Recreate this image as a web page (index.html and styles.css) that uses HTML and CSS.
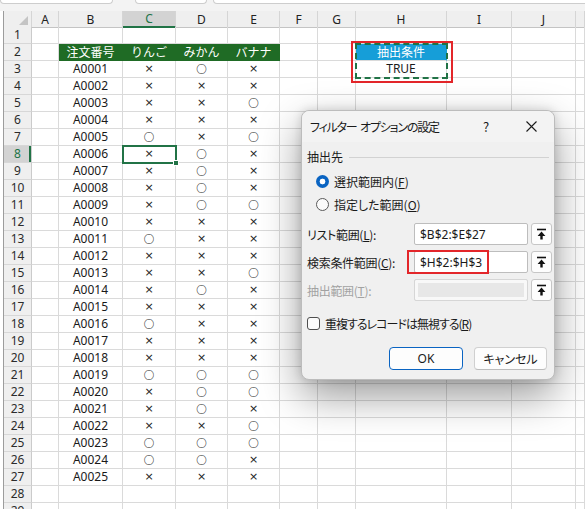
FILE: index.html
```html
<!DOCTYPE html>
<html lang="ja">
<head>
<meta charset="utf-8">
<title>フィルター オプションの設定</title>
<link rel="stylesheet" href="styles.css">
</head>
<body>
<div class="app">
  <div class="topbar">
    <div class="box b1"></div>
    <div class="box b2"></div>
    <div class="box b3"></div>
  </div>
  <div class="sheet">
    <div class="row colhdr"><span class="corner"><svg width="9" height="9" viewBox="0 0 9 9"><polygon points="9,0 9,9 0,9" fill="#c4c4c4"/></svg></span><span>A</span><span>B</span><span class="csel">C</span><span>D</span><span>E</span><span>F</span><span>G</span><span>H</span><span>I</span><span>J</span><span></span></div>
    <div class="row"><span class="rh">1</span><span></span><span></span><span></span><span></span><span></span><span></span><span></span><span></span><span></span><span></span><span></span></div>
    <div class="row"><span class="rh">2</span><span></span><span class="g">注文番号</span><span class="g">りんご</span><span class="g">みかん</span><span class="g">バナナ</span><span></span><span></span><span class="q">抽出条件</span><span></span><span></span><span></span></div>
    <div class="row"><span class="rh">3</span><span></span><span>A0001</span><span class="x">×</span><span class="o">○</span><span class="x">×</span><span></span><span></span><span>TRUE</span><span></span><span></span><span></span></div>
    <div class="row"><span class="rh">4</span><span></span><span>A0002</span><span class="x">×</span><span class="x">×</span><span class="x">×</span><span></span><span></span><span></span><span></span><span></span><span></span></div>
    <div class="row"><span class="rh">5</span><span></span><span>A0003</span><span class="x">×</span><span class="x">×</span><span class="o">○</span><span></span><span></span><span></span><span></span><span></span><span></span></div>
    <div class="row"><span class="rh">6</span><span></span><span>A0004</span><span class="x">×</span><span class="x">×</span><span class="x">×</span><span></span><span></span><span></span><span></span><span></span><span></span></div>
    <div class="row"><span class="rh">7</span><span></span><span>A0005</span><span class="o">○</span><span class="x">×</span><span class="o">○</span><span></span><span></span><span></span><span></span><span></span><span></span></div>
    <div class="row"><span class="rh rsel">8</span><span></span><span>A0006</span><span class="x">×</span><span class="o">○</span><span class="x">×</span><span></span><span></span><span></span><span></span><span></span><span></span></div>
    <div class="row"><span class="rh">9</span><span></span><span>A0007</span><span class="x">×</span><span class="o">○</span><span class="x">×</span><span></span><span></span><span></span><span></span><span></span><span></span></div>
    <div class="row"><span class="rh">10</span><span></span><span>A0008</span><span class="x">×</span><span class="o">○</span><span class="x">×</span><span></span><span></span><span></span><span></span><span></span><span></span></div>
    <div class="row"><span class="rh">11</span><span></span><span>A0009</span><span class="x">×</span><span class="o">○</span><span class="o">○</span><span></span><span></span><span></span><span></span><span></span><span></span></div>
    <div class="row"><span class="rh">12</span><span></span><span>A0010</span><span class="x">×</span><span class="x">×</span><span class="x">×</span><span></span><span></span><span></span><span></span><span></span><span></span></div>
    <div class="row"><span class="rh">13</span><span></span><span>A0011</span><span class="o">○</span><span class="x">×</span><span class="x">×</span><span></span><span></span><span></span><span></span><span></span><span></span></div>
    <div class="row"><span class="rh">14</span><span></span><span>A0012</span><span class="x">×</span><span class="x">×</span><span class="x">×</span><span></span><span></span><span></span><span></span><span></span><span></span></div>
    <div class="row"><span class="rh">15</span><span></span><span>A0013</span><span class="x">×</span><span class="x">×</span><span class="o">○</span><span></span><span></span><span></span><span></span><span></span><span></span></div>
    <div class="row"><span class="rh">16</span><span></span><span>A0014</span><span class="x">×</span><span class="o">○</span><span class="x">×</span><span></span><span></span><span></span><span></span><span></span><span></span></div>
    <div class="row"><span class="rh">17</span><span></span><span>A0015</span><span class="x">×</span><span class="x">×</span><span class="x">×</span><span></span><span></span><span></span><span></span><span></span><span></span></div>
    <div class="row"><span class="rh">18</span><span></span><span>A0016</span><span class="o">○</span><span class="x">×</span><span class="x">×</span><span></span><span></span><span></span><span></span><span></span><span></span></div>
    <div class="row"><span class="rh">19</span><span></span><span>A0017</span><span class="x">×</span><span class="x">×</span><span class="x">×</span><span></span><span></span><span></span><span></span><span></span><span></span></div>
    <div class="row"><span class="rh">20</span><span></span><span>A0018</span><span class="x">×</span><span class="x">×</span><span class="x">×</span><span></span><span></span><span></span><span></span><span></span><span></span></div>
    <div class="row"><span class="rh">21</span><span></span><span>A0019</span><span class="o">○</span><span class="o">○</span><span class="o">○</span><span></span><span></span><span></span><span></span><span></span><span></span></div>
    <div class="row"><span class="rh">22</span><span></span><span>A0020</span><span class="x">×</span><span class="o">○</span><span class="o">○</span><span></span><span></span><span></span><span></span><span></span><span></span></div>
    <div class="row"><span class="rh">23</span><span></span><span>A0021</span><span class="x">×</span><span class="o">○</span><span class="x">×</span><span></span><span></span><span></span><span></span><span></span><span></span></div>
    <div class="row"><span class="rh">24</span><span></span><span>A0022</span><span class="x">×</span><span class="x">×</span><span class="o">○</span><span></span><span></span><span></span><span></span><span></span><span></span></div>
    <div class="row"><span class="rh">25</span><span></span><span>A0023</span><span class="o">○</span><span class="o">○</span><span class="o">○</span><span></span><span></span><span></span><span></span><span></span><span></span></div>
    <div class="row"><span class="rh">26</span><span></span><span>A0024</span><span class="o">○</span><span class="o">○</span><span class="x">×</span><span></span><span></span><span></span><span></span><span></span><span></span></div>
    <div class="row"><span class="rh">27</span><span></span><span>A0025</span><span class="x">×</span><span class="x">×</span><span class="x">×</span><span></span><span></span><span></span><span></span><span></span><span></span></div>
    <div class="row"><span class="rh">28</span><span></span><span></span><span></span><span></span><span></span><span></span><span></span><span></span><span></span><span></span><span></span></div>
    <div class="row"><span class="rh">29</span><span></span><span></span><span></span><span></span><span></span><span></span><span></span><span></span><span></span><span></span><span></span></div>
  </div>

  <div class="cellsel"></div>
  <div class="handle"></div>
  <div class="ants"></div>
  <div class="redbox"></div>

  <div class="dlg">
    <div class="titlebar">
      <span class="ttl">フィルター オプションの設定</span>
      <span class="tbtn help">?</span>
      <span class="tbtn close"><svg width="11" height="11" viewBox="0 0 11 11"><path d="M0.5 0.5 L10.5 10.5 M10.5 0.5 L0.5 10.5" stroke="#1a1a1a" stroke-width="1.1"/></svg></span>
    </div>
    <div class="body">
      <div class="legend"><span>抽出先</span><span class="rule"></span></div>
      <div class="opt"><span class="radio on"></span><span>選択範囲内(<u>F</u>)</span></div>
      <div class="opt"><span class="radio"></span><span>指定した範囲(<u>O</u>)</span></div>
      <div class="fields">
        <span class="lbl">リスト範囲(<u>L</u>):</span>
        <span class="inp">$B$2:$E$27</span>
        <span class="pick"><svg width="11" height="12" viewBox="0 0 11 12"><path d="M1 1.5 H10" stroke="#111" stroke-width="1.6"/><path d="M5.5 3.6 L1.6 8 H4.3 V11.5 H6.7 V8 H9.4 Z" fill="#111"/></svg></span>
        <span class="lbl">検索条件範囲(<u>C</u>):</span>
        <span class="inp">$H$2:$H$3</span>
        <span class="pick"><svg width="11" height="12" viewBox="0 0 11 12"><path d="M1 1.5 H10" stroke="#111" stroke-width="1.6"/><path d="M5.5 3.6 L1.6 8 H4.3 V11.5 H6.7 V8 H9.4 Z" fill="#111"/></svg></span>
        <span class="lbl dis">抽出範囲(<u>T</u>):</span>
        <span class="inp off"></span>
        <span class="pick"><svg width="11" height="12" viewBox="0 0 11 12"><path d="M1 1.5 H10" stroke="#111" stroke-width="1.6"/><path d="M5.5 3.6 L1.6 8 H4.3 V11.5 H6.7 V8 H9.4 Z" fill="#111"/></svg></span>
      </div>
      <div class="chk"><span class="cbox"></span><span class="tight">重複するレコードは無視する(<u>R</u>)</span></div>
      <div class="btns"><span class="btn ok">OK</span><span class="btn">キャンセル</span></div>
    </div>
    <div class="annot"></div>
  </div>
</div>
</body>
</html>
```
FILE: styles.css
```css
* { box-sizing: border-box; margin: 0; padding: 0; }
html, body { width: 585px; height: 509px; overflow: hidden; background: #fff; }
body { font-family: "Noto Sans CJK JP", "Noto Sans", sans-serif; font-size: 13px; color: #1a1a1a; }

.app { position: relative; width: 585px; height: 509px; overflow: hidden; }

.topbar { height: 11px; background: #f3f3f3; display: flex; }
.box { height: 4px; background: #fff; border: 1px solid #cdcdcd; border-top: none; border-radius: 0 0 5px 5px; }
.b1 { width: 113px; }
.b2 { width: 72px; margin-left: 22px; }
.b3 { flex: 1; margin-left: 6px; margin-right: -10px; }

.sheet { margin-left: 3px; border-left: 1px solid #9c9c9c; }
.row { display: grid; grid-template-columns: 28px 27px 64px 53px 52px 52px 38px 38px 91px 65px 64px 1fr; height: 17px; font-family: "Noto Sans", "Noto Sans CJK JP", sans-serif; font-size: 12px; }
.row > span { display: flex; align-items: center; justify-content: center; border-right: 1px solid #dadada; border-bottom: 1px solid #dadada; line-height: 16px; white-space: nowrap; }
.row > .x { font-family: "DejaVu Sans", sans-serif; font-size: 11px; color: #222; }
.row > .o { font-family: "Noto Sans CJK JP", sans-serif; font-size: 10.5px; font-weight: 700; color: #111; }
.row > .rh { background: #efefef; border-right-color: #cbcbcb; border-bottom-color: #d7d7d7; font-size: 12px; color: #2b2b2b; }
.rh.rsel { background: #d3d3d3; color: #217346; box-shadow: inset -2px 0 0 #217346; }

.colhdr { height: 16px; }
.colhdr > span { background: #efefef; border-right-color: #d5d5d5; border-bottom-color: #c4c4c4; font-size: 12px; color: #222; line-height: 15px; }
.colhdr > .corner { justify-content: flex-end; align-items: flex-end; padding: 0 3px 2px 0; }
.colhdr > .csel { background: #d3d3d3; color: #217346; border-bottom: 2px solid #217346; }

.row > .g { background: #1f6b25; color: #fff; border-right-color: #1f6b25; border-bottom-color: #1f6b25; font-family: "Noto Sans CJK JP", sans-serif; }
.row > .q { background: #169ed8; color: #fff; border-right-color: #169ed8; font-family: "Noto Sans CJK JP", sans-serif; }

.cellsel { position: absolute; left: 122px; top: 145px; width: 55px; height: 19px; border: 2px solid #217346; }
.handle { position: absolute; left: 173px; top: 160px; width: 6px; height: 6px; background: #217346; border: 1px solid #fff; }
.ants { position: absolute; left: 355px; top: 43px; width: 93px; height: 36px; border: 2px dashed #217346; }
.redbox { position: absolute; left: 351px; top: 41px; width: 102px; height: 42px; border: 2px solid #e3262a; }

.dlg { position: absolute; left: 301px; top: 110px; width: 254px; height: 270px; background: #f0f0f0; border: 1px solid #bcbcbc; border-radius: 8px; box-shadow: 0 16px 42px rgba(0,0,0,0.4), 0 0 10px rgba(0,0,0,0.14); font-size: 12px; color: #1a1a1a; font-feature-settings: "palt"; }
.titlebar { height: 31px; display: flex; align-items: center; background: #f3f3f3; border-radius: 8px 8px 0 0; }
.ttl { flex: 1; padding-left: 8px; letter-spacing: -1.2px; word-spacing: 2px; }
.tbtn { display: flex; align-items: center; justify-content: center; height: 31px; font-size: 13px; }
.help { width: 44px; }
.close { width: 46px; }

.body { padding: 7px 5px 0 5px; }
.legend { display: flex; align-items: center; height: 16px; line-height: 16px; }
.rule { flex: 1; height: 1px; background: #d2d2d2; margin-left: 6px; }

.opt { display: flex; align-items: center; gap: 5px; height: 23px; padding-left: 9px; }
.legend + .opt { margin-top: 5px; }
.radio { width: 13px; height: 13px; border-radius: 50%; border: 1px solid #5a5a5a; background: #fbfbfb; }
.radio.on { border: none; background: radial-gradient(circle, #fff 0 2.6px, #0a64c2 3.2px); }

.fields { display: grid; grid-template-columns: 104px 114px 21px; column-gap: 3px; grid-auto-rows: 24px; row-gap: 4px; margin-top: 6px; align-items: center; }
.lbl { letter-spacing: -0.3px; }
.lbl.dis { color: #a2a2a2; }
.inp { height: 22px; display: flex; align-items: center; padding-left: 5px; background: #fff; border: 1px solid #bdbdbd; border-radius: 2px; font-family: "Noto Sans", sans-serif; font-size: 12px; }
.inp.off { background: #e7e7e7; border-color: #d6d6d6; box-shadow: inset 0 0 0 3px #f8f8f8; }
.pick { height: 22px; display: flex; align-items: center; justify-content: center; background: #fdfdfd; border: 1px solid #c6c6c6; border-radius: 3px; }

.chk { display: flex; align-items: center; gap: 5px; height: 18px; margin-top: 12px; }
.tight { letter-spacing: -1px; }
.cbox { width: 13px; height: 13px; border: 1px solid #4e4e4e; border-radius: 3px; background: #fbfbfb; }

.btns { display: flex; justify-content: flex-end; gap: 11px; margin-top: 15px; padding-right: 2px; }
.btn { width: 73px; height: 23px; display: flex; align-items: center; justify-content: center; background: #fdfdfd; border: 1px solid #d0d0d0; border-bottom-color: #bcbcbc; border-radius: 4px; }
.btn.ok { width: 74px; border: 1px solid #0a64c2; font-family: "Noto Sans", sans-serif; }

.annot { position: absolute; left: 105px; top: 139px; width: 82px; height: 24px; border: 2px solid #e3262a; }
```
